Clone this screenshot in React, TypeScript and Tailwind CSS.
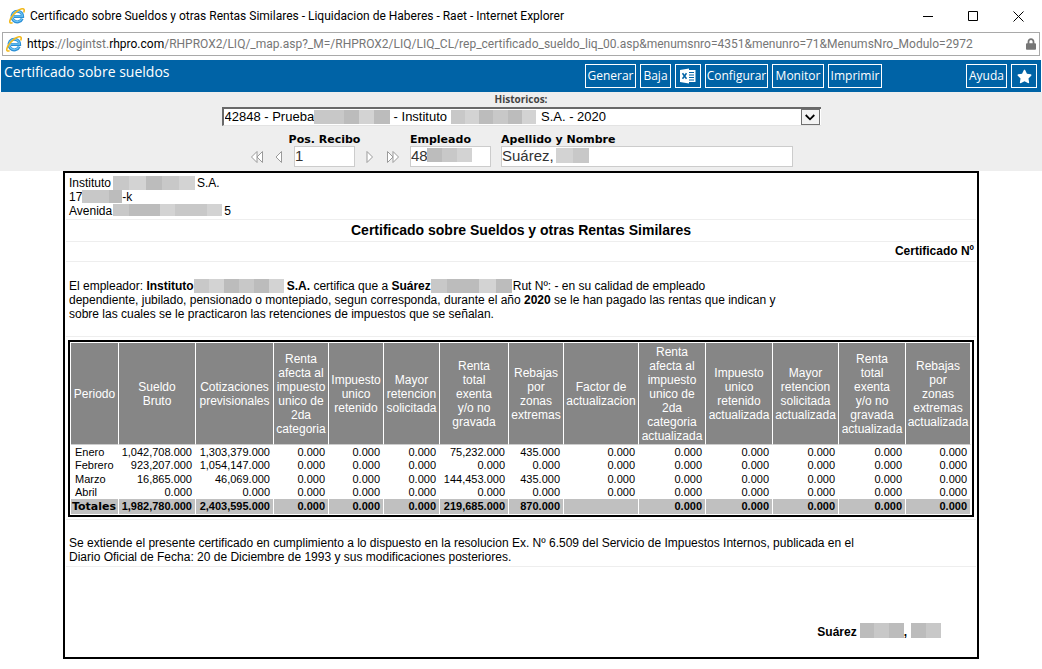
import { FaLock, FaStar } from "react-icons/fa";

const columns = [
  { title: "Periodo", width: "w-[48px]" },
  { title: "Sueldo\nBruto", width: "w-[77px]" },
  { title: "Cotizaciones\nprevisionales", width: "w-[78px]" },
  { title: "Renta\nafecta al\nimpuesto\nunico de\n2da\ncategoria", width: "w-[55px]" },
  { title: "Impuesto\nunico\nretenido", width: "w-[55px]" },
  { title: "Mayor\nretencion\nsolicitada", width: "w-[56px]" },
  { title: "Renta\ntotal\nexenta\ny/o no\ngravada", width: "w-[69px]" },
  { title: "Rebajas\npor\nzonas\nextremas", width: "w-[55px]" },
  { title: "Factor de\nactualizacion", width: "w-[75px]" },
  { title: "Renta\nafecta al\nimpuesto\nunico de\n2da\ncategoria\nactualizada", width: "w-[67px]" },
  { title: "Impuesto\nunico\nretenido\nactualizada", width: "w-[67px]" },
  { title: "Mayor\nretencion\nsolicitada\nactualizada", width: "w-[66px]" },
  { title: "Renta\ntotal\nexenta\ny/o no\ngravada\nactualizada", width: "w-[67px]" },
  { title: "Rebajas\npor\nzonas\nextremas\nactualizada", width: "w-[65px]" },
];

const Z = "0.000";

const rows = [
  ["Enero", "1,042,708.000", "1,303,379.000", Z, Z, Z, "75,232.000", "435.000", Z, Z, Z, Z, Z, Z],
  ["Febrero", "923,207.000", "1,054,147.000", Z, Z, Z, Z, Z, Z, Z, Z, Z, Z, Z],
  ["Marzo", "16,865.000", "46,069.000", Z, Z, Z, "144,453.000", "435.000", Z, Z, Z, Z, Z, Z],
  ["Abril", Z, Z, Z, Z, Z, Z, Z, Z, Z, Z, Z, Z, Z],
];

const totals = ["1,982,780.000", "2,403,595.000", Z, Z, Z, "219,685.000", "870.000", "", Z, Z, Z, Z, Z];

const nbsp = (n: number) => "\u00a0".repeat(n);

const historico = `42848 - Prueba${nbsp(22)}- Instituto${nbsp(26)}S.A. - 2020`;

// Hidden personal data, shown as a strip of grey blocks
function Redacted({ shades, className }: { shades: string[]; className: string }) {
  return (
    <span aria-hidden="true" className={`inline-flex overflow-hidden ${className}`}>
      {shades.map((shade, i) => (
        <span key={i} className={`h-full flex-1 ${shade}`} />
      ))}
    </span>
  );
}

const A = "bg-[#c8c8c8]";
const B = "bg-[#d3d3d3]";
const C = "bg-[#bcbcbc]";

function ExplorerIcon() {
  return (
    <svg viewBox="0 0 16 16" className="h-4 w-4 shrink-0" fill="none">
      <path d="M13.2 10.6a5.3 5.3 0 1 1 .4-2.2H5" stroke="#2a8fd6" strokeWidth="3" />
      <path d="M13 10.6a5.2 5.2 0 1 1 .5-2.4H5" stroke="#6fc4f2" strokeWidth="1.2" />
      <path
        d="M3.6 14.6C1.6 15.6.4 15 .9 12.6 1.6 9.2 5.6 4.3 9.8 2 12.8.3 15.4.2 15.2 2.6c0 .6-.2 1.2-.5 1.9"
        stroke="#f2b91d"
        strokeWidth="1.6"
      />
    </svg>
  );
}

function ExcelIcon() {
  return (
    <svg viewBox="0 0 16 16" className="h-4 w-4" fill="none">
      <path d="M8 2h7.5v12H8z" fill="#fff" />
      <path d="M9 4.5h5M9 7h5M9 9.5h5M9 12h5" stroke="#0063a6" strokeWidth="1" />
      <path d="M0 2 9 .5v15L0 14z" fill="#fff" />
      <path d="m2.5 5.2 4 5.6M6.5 5.2l-4 5.6" stroke="#0063a6" strokeWidth="1.5" />
    </svg>
  );
}

function TitleBar() {
  return (
    <div className="flex h-8 items-center pl-[9px] pr-[14px]">
      <ExplorerIcon />
      <h1 className="ml-[5px] font-['Roboto',sans-serif] text-[12px] text-black">
        Certificado sobre Sueldos y otras Rentas Similares - Liquidacion de Haberes - Raet - Internet Explorer
      </h1>
      <div className="ml-auto flex items-center gap-[25px]">
        <button aria-label="Minimizar" className="flex h-5 w-5 items-center justify-center">
          <svg viewBox="0 0 11 11" className="h-[11px] w-[11px]" stroke="#000">
            <path d="M0 5.5h10" />
          </svg>
        </button>
        <button aria-label="Maximizar" className="flex h-5 w-5 items-center justify-center">
          <svg viewBox="0 0 11 11" className="h-[11px] w-[11px]" fill="none" stroke="#000">
            <path d="M.5.5h9v9h-9z" />
          </svg>
        </button>
        <button aria-label="Cerrar" className="flex h-5 w-5 items-center justify-center">
          <svg viewBox="0 0 11 11" className="h-[11px] w-[11px]" stroke="#000">
            <path d="m.5.5 10 10M10.5.5l-10 10" />
          </svg>
        </button>
      </div>
    </div>
  );
}

function AddressBar() {
  return (
    <div className="mx-[2px] flex h-6 items-center border border-[#a9a9a9] pl-[3px] pr-[3px]">
      <ExplorerIcon />
      <p className="ml-[5px] whitespace-nowrap font-['Roboto',sans-serif] text-[12px] text-[#767676]">
        <span className="text-black">https</span>://logintst.<span className="text-black">rhpro.com</span>
        /RHPROX2/LIQ/_map.asp?_M=/RHPROX2/LIQ/LIQ_CL/rep_certificado_sueldo_liq_00.asp&amp;menumsnro=4351&amp;menunro=71&amp;MenumsNro_Modulo=2972
      </p>
      <FaLock className="ml-auto h-3 w-[10px] shrink-0 text-[#767676]" />
    </div>
  );
}

const toolButton =
  "flex h-6 items-center justify-center border border-white px-[3px] font-['Open_Sans',sans-serif] text-[12px] text-white";

function Toolbar() {
  return (
    <header className="mx-px mt-1 flex h-8 bg-[#0063a6]">
      <h2 className="pl-[3px] pt-[2px] font-['Open_Sans',sans-serif] text-[14px] leading-5 text-white">
        Certificado sobre sueldos
      </h2>
      <div className="ml-auto flex gap-1 pt-1">
        <button className={`${toolButton} w-[51px]`}>Generar</button>
        <button className={`${toolButton} w-[31px]`}>Baja</button>
        <button aria-label="Excel" className={`${toolButton} w-[26px]`}>
          <ExcelIcon />
        </button>
        <button className={`${toolButton} w-[63px]`}>Configurar</button>
        <button className={`${toolButton} w-[52px]`}>Monitor</button>
        <button className={`${toolButton} w-[54px]`}>Imprimir</button>
      </div>
      <div className="ml-[84px] flex gap-1 pr-1 pt-1">
        <button className={`${toolButton} w-[41px]`}>Ayuda</button>
        <button aria-label="Favorito" className={`${toolButton} w-[26px]`}>
          <FaStar className="h-[15px] w-[15px] shrink-0" />
        </button>
      </div>
    </header>
  );
}

function ArrowButton({ label, path, className }: { label: string; path: string; className: string }) {
  return (
    <button type="button" aria-label={label} className={className}>
      <svg viewBox="0 0 12 12" className="h-3 w-3" fill="#fff" stroke="#9a9a9a" strokeWidth="1">
        <path d={path} />
      </svg>
    </button>
  );
}

const fieldLabel = "font-['DejaVu_Sans',sans-serif] text-[11px] font-bold leading-[13px] text-black";
const field =
  "block h-[21px] border border-[#cccccc] bg-white font-['Liberation_Sans',sans-serif] text-[15px] text-[#333]";

function Filters() {
  return (
    <form className="flex flex-col items-center bg-[#eeeeee] pb-1">
      <label
        htmlFor="historicos"
        className="font-['Open_Sans',sans-serif] text-[10px] font-bold leading-[15px] text-[#444]"
      >
        Historicos:
      </label>
      <div className="relative w-[599px]">
        <select
          id="historicos"
          className="block h-[19px] w-full appearance-none border-b border-l-2 border-t-2 border-b-[#e3e3e3] border-l-[#696969] border-t-[#696969] bg-white pl-px font-['Liberation_Sans',sans-serif] text-[13px] leading-4 text-black"
        >
          <option>{historico}</option>
        </select>
        <Redacted shades={[A, A, C, B, C]} className="absolute left-[92px] top-[3px] h-[14px] w-[76px]" />
        <Redacted shades={[A, B, C, A, C, B]} className="absolute left-[229px] top-[3px] h-[14px] w-[86px]" />
        <span className="pointer-events-none absolute right-[1px] top-[2px] flex h-4 w-[19px] items-center justify-center border border-[#707070] bg-[#f3f3f3]">
          <svg viewBox="0 0 10 7" className="h-[7px] w-[10px]" fill="none" stroke="#000" strokeWidth="1.8">
            <path d="m.7 1 4.3 4.3L9.3 1" />
          </svg>
        </span>
      </div>
      <div className="mt-[7px] flex pl-[2px]">
        <div className="flex w-[159px] flex-col">
          <label htmlFor="recibo" className={`${fieldLabel} w-[147px] text-center`}>
            Pos. Recibo
          </label>
          <div className="flex items-center">
            <ArrowButton label="Primero" path="M6 .5.5 6 6 11.5zM11.5.5 6 6l5.5 5.5z" className="w-[22px]" />
            <ArrowButton label="Anterior" path="M8.5.5 3 6l5.5 5.5z" className="w-[21px]" />
            <input id="recibo" defaultValue="1" className={`${field} w-[61px]`} />
            <ArrowButton label="Siguiente" path="M3 .5 8.5 6 3 11.5z" className="ml-[9px] w-[23px]" />
            <ArrowButton label="Ultimo" path="M.5.5 6 6 .5 11.5zM6 .5 11.5 6 6 11.5z" className="w-3" />
          </div>
        </div>
        <div className="flex w-[91px] flex-col">
          <label htmlFor="empleado" className={fieldLabel}>
            Empleado
          </label>
          <div className="relative">
            <input id="empleado" defaultValue="48" className={`${field} w-[81px]`} />
            <Redacted shades={[C, A, B]} className="absolute left-[17px] top-[2px] h-[14px] w-[45px]" />
          </div>
        </div>
        <div className="flex flex-col">
          <label htmlFor="nombre" className={fieldLabel}>
            Apellido y Nombre
          </label>
          <div className="relative">
            <input id="nombre" defaultValue="Suárez," className={`${field} w-[292px]`} />
            <Redacted shades={[B, A]} className="absolute left-[55px] top-[2px] h-[15px] w-[33px]" />
          </div>
        </div>
      </div>
    </form>
  );
}

function IncomeTable() {
  return (
    <div className="mx-[2px] mb-[2px] mt-[3px] border-2 border-black p-px">
      <table className="w-full table-fixed border-separate border-spacing-0 text-[11px] leading-[13px]">
        <colgroup>
          {columns.map((column, i) => (
            <col key={i} className={column.width} />
          ))}
        </colgroup>
        <thead>
          <tr className="h-[102px]">
            {columns.map((column, i) => (
              <th
                key={i}
                className="whitespace-pre border-b border-r border-b-[#cccccc] border-r-white bg-[#868686] p-0 text-center align-middle text-[12px] font-normal leading-[14px] text-white"
              >
                {column.title}
              </th>
            ))}
          </tr>
        </thead>
        <tbody>
          {rows.map((row) => (
            <tr key={row[0]} className="h-[13px] odd:h-[14px]">
              {row.map((cell, i) => (
                <td key={i} className={i === 0 ? "p-0 pl-1" : "p-0 pr-1 text-right"}>
                  {cell}
                </td>
              ))}
            </tr>
          ))}
        </tbody>
        <tfoot>
          <tr className="h-[15px] bg-[#c0c0c0] font-bold">
            <th className="border-r border-white p-0 pl-px text-left font-['DejaVu_Sans',sans-serif]">Totales</th>
            {totals.map((cell, i) => (
              <td key={i} className="border-r border-white p-0 pr-[3px] text-right">
                {cell}
              </td>
            ))}
          </tr>
        </tfoot>
      </table>
    </div>
  );
}

function Certificate() {
  return (
    <main className="mx-[63px] border-2 border-black bg-white px-px font-['Liberation_Sans',sans-serif] text-[12px] leading-[14px] text-black">
      <section className="border-b border-[#eeeeee] pb-px pl-[3px] pt-[3px]">
        <p>
          Instituto
          <Redacted shades={[A, B, C, A, B]} className="mx-[2px] h-[14px] w-[82px] align-top" />
          S.A.
        </p>
        <p>
          17
          <Redacted shades={[A, A, C]} className="h-[13px] w-[40px] align-top" />
          -k
        </p>
        <p>
          Avenida
          <Redacted shades={[A, C, C, B, A, A, B]} className="ml-px mr-[2px] h-[12px] w-[109px] align-top" />
          5
        </p>
      </section>
      <h3 className="border-b border-[#eeeeee] text-center text-[14px] font-bold leading-[21px]">
        Certificado sobre Sueldos y otras Rentas Similares
      </h3>
      <p className="border-b border-[#eeeeee] pr-[2px] text-right font-bold leading-[19px]">Certificado Nº</p>
      <section className="border-b border-[#eeeeee] pb-[15px] pl-[3px] pt-[17px]">
        <p>
          El empleador: <b>Instituto</b>
          <Redacted shades={[A, B, C, A, C, B]} className="mr-[3px] h-[14px] w-[90px] align-top" />
          <b>S.A.</b> certifica que a <b>Suárez</b>
          <Redacted shades={[A, C, C, B, C]} className="mr-px h-[14px] w-[81px] align-top" />
          Rut Nº: - en su calidad de empleado
          <br />
          dependiente, jubilado, pensionado o montepiado, segun corresponda, durante el año <b>2020</b> se le han pagado
          las rentas que indican y
          <br />
          sobre las cuales se le practicaron las retenciones de impuestos que se señalan.
        </p>
      </section>
      <IncomeTable />
      <p className="border-y border-[#eeeeee] pb-[2px] pl-[3px] pt-4">
        Se extiende el presente certificado en cumplimiento a lo dispuesto en la resolucion Ex. Nº 6.509 del Servicio de
        Impuestos Internos, publicada en el
        <br />
        Diario Oficial de Fecha: 20 de Diciembre de 1993 y sus modificaciones posteriores.
      </p>
      <p className="flex justify-end pb-[18px] pr-[35px] pt-[58px] font-bold">
        Suárez
        <Redacted shades={[C, A, C]} className="-mt-[2px] ml-[3px] h-[15px] w-[44px]" />
        ,
        <Redacted shades={[C, A]} className="-mt-[2px] ml-1 h-[15px] w-[30px]" />
      </p>
    </main>
  );
}

export default function App() {
  return (
    <div className="min-h-screen bg-white">
      <TitleBar />
      <AddressBar />
      <Toolbar />
      <Filters />
      <Certificate />
    </div>
  );
}
